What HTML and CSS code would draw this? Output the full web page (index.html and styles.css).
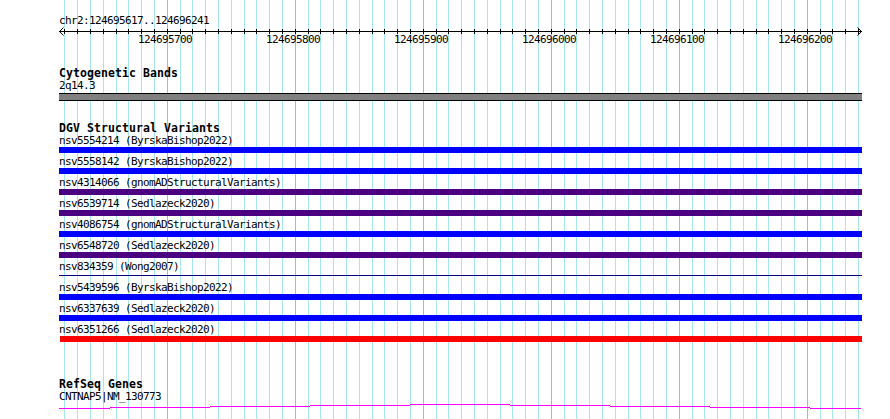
FILE: index.html
```html
<!DOCTYPE html>
<html lang="en">
<head>
<meta charset="utf-8">
<title>Genome browser</title>
<link rel="stylesheet" href="styles.css">
</head>
<body>
<div class="canvas">
  <svg class="grid" width="890" height="419" viewBox="0 0 890 419" aria-hidden="true">
    <path class="grid-minor" d="M64.5 0V419M77.5 0V419M90.5 0V419M103.5 0V419M116.5 0V419M128.5 0V419M141.5 0V419M154.5 0V419M180.5 0V419M192.5 0V419M205.5 0V419M218.5 0V419M231.5 0V419M244.5 0V419M256.5 0V419M269.5 0V419M282.5 0V419M308.5 0V419M320.5 0V419M333.5 0V419M346.5 0V419M359.5 0V419M372.5 0V419M384.5 0V419M397.5 0V419M410.5 0V419M436.5 0V419M448.5 0V419M461.5 0V419M474.5 0V419M487.5 0V419M500.5 0V419M512.5 0V419M525.5 0V419M538.5 0V419M564.5 0V419M576.5 0V419M589.5 0V419M602.5 0V419M615.5 0V419M628.5 0V419M640.5 0V419M653.5 0V419M666.5 0V419M692.5 0V419M704.5 0V419M717.5 0V419M730.5 0V419M743.5 0V419M756.5 0V419M768.5 0V419M781.5 0V419M794.5 0V419M820.5 0V419M832.5 0V419M845.5 0V419M858.5 0V419"/>
    <path class="grid-major" d="M167.5 0V419M295.5 0V419M423.5 0V419M551.5 0V419M679.5 0V419M807.5 0V419"/>
  </svg>

  <div class="tracks">
    <div class="text chr-label">chr2:124695617..124696241</div>
    <div class="ruler">
      <svg class="ruler-svg" width="803" height="9" viewBox="59 27 803 9" aria-hidden="true">
        <path class="ruler-line" d="M59 31.5H862"/>
        <path class="ruler-ticks" d="M64.5 29V34M77.5 29V34M90.5 29V34M103.5 29V34M116.5 29V34M128.5 29V34M141.5 29V34M154.5 29V34M167.5 29V34M180.5 29V34M192.5 29V34M205.5 29V34M218.5 29V34M231.5 29V34M244.5 29V34M256.5 29V34M269.5 29V34M282.5 29V34M295.5 29V34M308.5 29V34M320.5 29V34M333.5 29V34M346.5 29V34M359.5 29V34M372.5 29V34M384.5 29V34M397.5 29V34M410.5 29V34M423.5 29V34M436.5 29V34M448.5 29V34M461.5 29V34M474.5 29V34M487.5 29V34M500.5 29V34M512.5 29V34M525.5 29V34M538.5 29V34M551.5 29V34M564.5 29V34M576.5 29V34M589.5 29V34M602.5 29V34M615.5 29V34M628.5 29V34M640.5 29V34M653.5 29V34M666.5 29V34M679.5 29V34M692.5 29V34M704.5 29V34M717.5 29V34M730.5 29V34M743.5 29V34M756.5 29V34M768.5 29V34M781.5 29V34M794.5 29V34M807.5 29V34M820.5 29V34M832.5 29V34M845.5 29V34M858.5 29V34"/>
        <path class="ruler-arrow" d="M63.5 27.5L59.5 31.5L63.5 35.5M857.5 27.5L861.5 31.5L857.5 35.5"/>
      </svg>
      <span class="text tick-label" style="left:79px">124695700</span>
      <span class="text tick-label" style="left:207px">124695800</span>
      <span class="text tick-label" style="left:335px">124695900</span>
      <span class="text tick-label" style="left:463px">124696000</span>
      <span class="text tick-label" style="left:591px">124696100</span>
      <span class="text tick-label" style="left:719px">124696200</span>
    </div>

    <section class="track track-cyto">
      <h2 class="track-title">Cytogenetic Bands</h2>
      <div class="text feature-label">2q14.3</div>
      <div class="band"></div>
    </section>

    <section class="track track-dgv">
      <h2 class="track-title">DGV Structural Variants</h2>
      <div class="rows">
        <div class="row"><div class="text feature-label">nsv5554214 (ByrskaBishop2022)</div><div class="bar bar-blue"></div></div>
        <div class="row"><div class="text feature-label">nsv5558142 (ByrskaBishop2022)</div><div class="bar bar-blue"></div></div>
        <div class="row"><div class="text feature-label">nsv4314066 (gnomADStructuralVariants)</div><div class="bar bar-purple"></div></div>
        <div class="row"><div class="text feature-label">nsv6539714 (Sedlazeck2020)</div><div class="bar bar-purple"></div></div>
        <div class="row"><div class="text feature-label">nsv4086754 (gnomADStructuralVariants)</div><div class="bar bar-blue"></div></div>
        <div class="row"><div class="text feature-label">nsv6548720 (Sedlazeck2020)</div><div class="bar bar-purple"></div></div>
        <div class="row"><div class="text feature-label">nsv834359 (Wong2007)</div><div class="bar-thin"></div></div>
        <div class="row"><div class="text feature-label">nsv5439596 (ByrskaBishop2022)</div><div class="bar bar-blue"></div></div>
        <div class="row"><div class="text feature-label">nsv6337639 (Sedlazeck2020)</div><div class="bar bar-blue"></div></div>
        <div class="row"><div class="text feature-label">nsv6351266 (Sedlazeck2020)</div><div class="bar bar-red"></div></div>
      </div>
    </section>

    <section class="track track-refseq">
      <h2 class="track-title">RefSeq Genes</h2>
      <div class="text feature-label">CNTNAP5|NM_130773</div>
      <svg class="gene-svg" width="803" height="16" viewBox="59 403 803 16" aria-hidden="true">
        <path class="gene-line" d="M59 408.5H110M110 407.5H210M210 406.5H310M310 405.5H410M410 404.5H510M510 405.5H610M610 406.5H710M710 407.5H810M810 408.5H861"/>
      </svg>
    </section>
  </div>
</div>
</body>
</html>
```

FILE: styles.css
```css
html, body {
  margin: 0;
  padding: 0;
  background: #ffffff;
}

.canvas {
  position: relative;
  width: 890px;
  height: 419px;
  overflow: hidden;
  background: #ffffff;
}

.grid {
  position: absolute;
  left: 0;
  top: 0;
  display: block;
}

.grid path {
  fill: none;
  stroke-width: 1;
  shape-rendering: crispEdges;
}

.grid-minor { stroke: #a8e6ec; }
.grid-major { stroke: #80c4f0; }

.tracks {
  position: relative;
  width: 803px;
  padding: 15px 0 0 59px;
}

.text {
  font-family: "DejaVu Sans Mono", "Liberation Mono", monospace;
  font-size: 11px;
  letter-spacing: -0.62px;
  line-height: 12px;
  height: 12px;
  color: #000000;
  white-space: nowrap;
}

.ruler {
  position: relative;
  height: 20px;
}

.ruler-svg {
  display: block;
}

.ruler-line,
.ruler-ticks {
  fill: none;
  stroke: #000000;
  stroke-width: 1;
  shape-rendering: crispEdges;
}

.ruler-arrow {
  fill: none;
  stroke: #000000;
  stroke-width: 1;
}

.tick-label {
  position: absolute;
  top: 7px;
}

.track {
  margin-top: 21px;
}

.track-title {
  margin: 0 0 1px;
  font-family: "DejaVu Sans Mono", "Liberation Mono", monospace;
  font-weight: bold;
  font-size: 11.5px;
  letter-spacing: 0.08px;
  line-height: 12px;
  height: 12px;
  color: #000000;
  white-space: nowrap;
}

.track.track-cyto {
  margin-top: 20px;
}

.band {
  margin-top: 1px;
  height: 6px;
  background: #808080;
  border-top: 1px solid #000000;
  border-bottom: 1px solid #000000;
}

.rows {
  display: flex;
  flex-direction: column;
  gap: 3px;
}

.bar {
  height: 6px;
}

.bar-blue { background: #0000ff; }
.bar-purple { background: #4b0082; }
.bar-red { background: #ff0000; margin-left: 1px; }

.bar-thin {
  height: 1px;
  margin: 2px 0 3px;
  background: #000080;
}

.track.track-refseq {
  margin-top: 36px;
}

.gene-svg {
  display: block;
}

.gene-line {
  fill: none;
  stroke: #ff00ff;
  stroke-width: 1;
  shape-rendering: crispEdges;
}
```
